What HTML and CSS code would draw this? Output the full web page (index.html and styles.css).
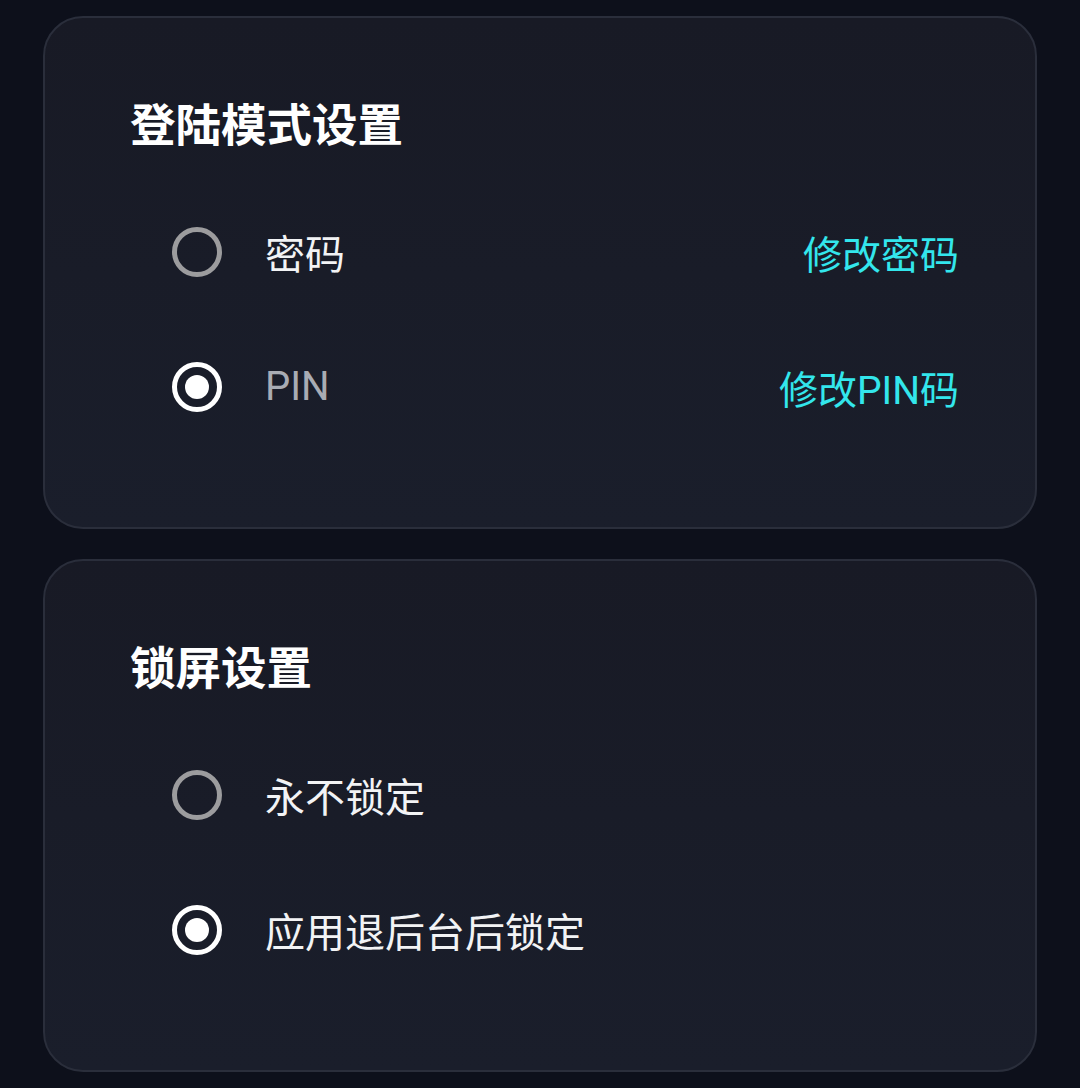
FILE: index.html
```html
<!DOCTYPE html>
<html lang="zh-CN">
<head>
  <meta charset="UTF-8">
  <meta name="viewport" content="width=device-width, initial-scale=1.0">
  <title>安全设置</title>
  <link rel="stylesheet" href="styles.css">
</head>
<body>
  <div class="page">
    <!-- 登陆模式 -->
    <section class="card">
      <h2 class="card-title">登陆模式设置</h2>
      <div class="options">
        <div class="option">
          <span class="radio"></span>
          <span class="label">密码</span>
          <a class="action" href="#">修改密码</a>
        </div>
        <div class="option">
          <span class="radio checked"></span>
          <span class="label latin">PIN</span>
          <a class="action" href="#">修改PIN码</a>
        </div>
      </div>
    </section>

    <!-- 锁屏 -->
    <section class="card">
      <h2 class="card-title">锁屏设置</h2>
      <div class="options">
        <div class="option">
          <span class="radio"></span>
          <span class="label">永不锁定</span>
        </div>
        <div class="option">
          <span class="radio checked"></span>
          <span class="label">应用退后台后锁定</span>
        </div>
      </div>
    </section>
  </div>
</body>
</html>
```

FILE: styles.css
```css
* {
  margin: 0;
  padding: 0;
  box-sizing: border-box;
}

body {
  background-color: #0d101b;
  font-family: Roboto, "Noto Sans CJK SC", sans-serif;
  color: #f2f3f5;
  height: 1088px;
  overflow: hidden;
}

.page {
  display: flex;
  flex-direction: column;
  gap: 30px;
  padding: 16px 43px;
}

.card {
  height: 513px;
  border: 2px solid #2a2e3b;
  border-radius: 40px;
  background: linear-gradient(180deg, #181a25 0%, #1a1e2b 100%);
  padding: 79px 76px 73px 85px;
}

.card-title {
  font-size: 45.5px;
  font-weight: 700;
  line-height: 60px;
  color: #ffffff;
}

.options {
  margin-top: 27px;
  padding-left: 42px;
}

.option {
  display: flex;
  align-items: center;
  height: 135px;
}

.radio {
  width: 50px;
  height: 50px;
  border: 5px solid #9c9c9e;
  border-radius: 50%;
  display: flex;
  align-items: center;
  justify-content: center;
  flex-shrink: 0;
}

.radio.checked {
  border-color: #ffffff;
}

.radio.checked::after {
  content: "";
  width: 24px;
  height: 24px;
  border-radius: 50%;
  background-color: #ffffff;
}

.label {
  margin-left: 43px;
  font-size: 40px;
  color: #f2f3f5;
}

.label.latin {
  color: #a9acb4;
}

.action {
  margin-left: auto;
  font-size: 39px;
  color: #33e6ec;
  text-decoration: none;
}
```
